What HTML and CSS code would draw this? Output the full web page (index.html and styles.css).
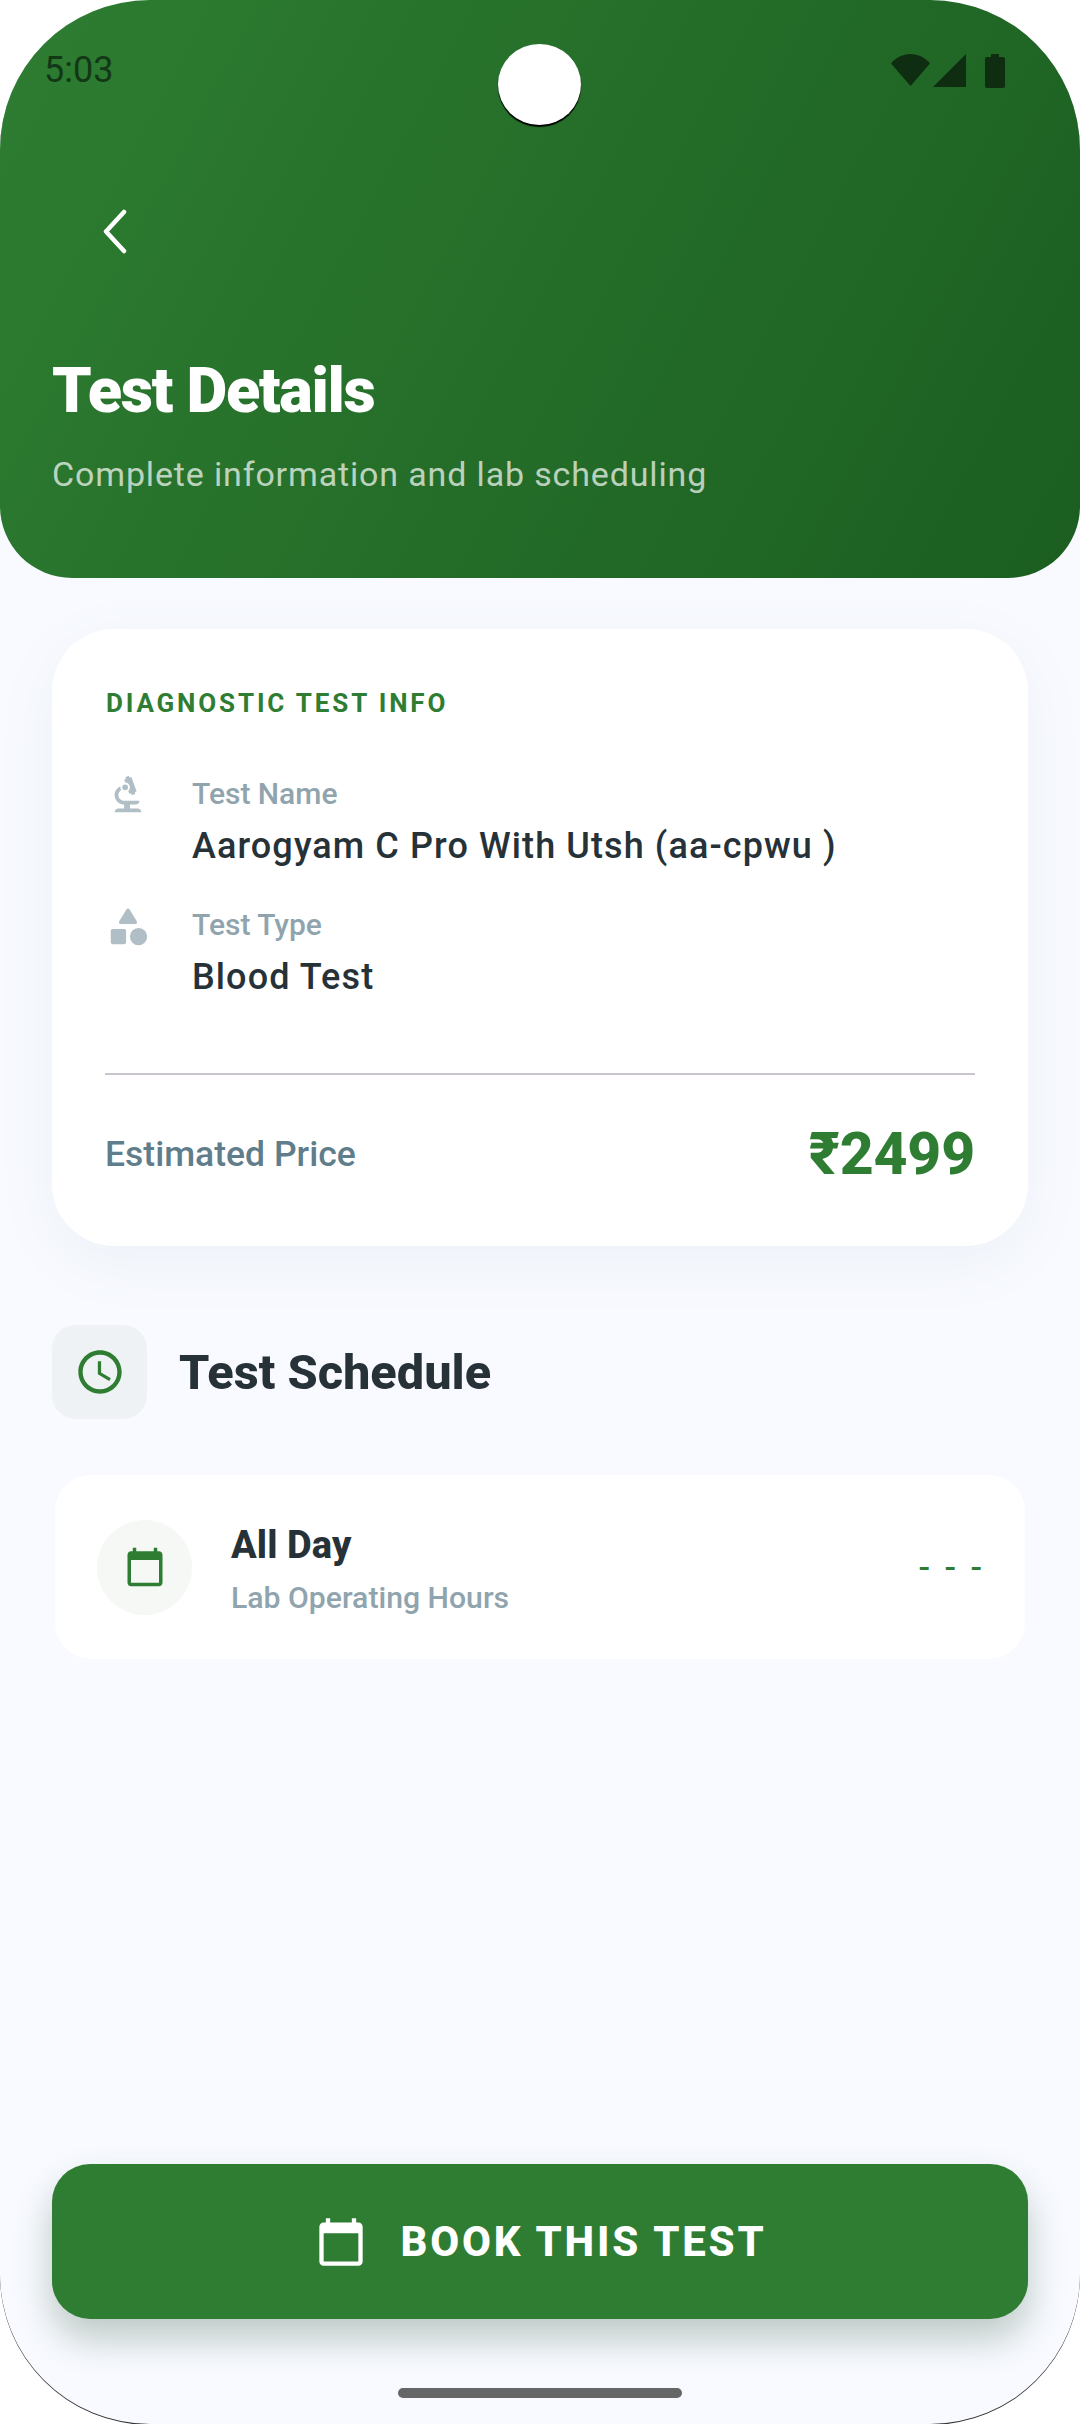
FILE: index.html
```html
<!DOCTYPE html>
<html lang="en">
	<head>
		<meta charset="UTF-8" />
		<meta name="viewport" content="width=device-width, initial-scale=1.0" />
		<title>Test Details</title>
		<link rel="stylesheet" href="styles.css">
	</head>
	<body>
		<div class="screen">
			<!-- Green header with status bar -->
			<header class="header">
				<div class="status-bar">
					<span class="status-time">5:03</span>
					<div class="status-icons">
						<svg class="wifi-icon" viewBox="0 0 39 32"><path d="M0 9.5C5 3.5 12 0 19.5 0S34 3.5 39 9.5L19.5 32z" /></svg>
						<svg class="signal-icon" viewBox="0 0 33 33"><path d="M33 0v33H0z" /></svg>
						<svg class="battery-icon" viewBox="0 0 20 34"><path d="M6 0h8v3h4a2 2 0 0 1 2 2v27a2 2 0 0 1-2 2H2a2 2 0 0 1-2-2V5a2 2 0 0 1 2-2h4z" /></svg>
					</div>
				</div>
				<button class="back-btn">
					<svg viewBox="0 0 26 45" class="back-icon"><path d="M22 3 4 22.5 22 42" /></svg>
				</button>
				<h1 class="title">Test Details</h1>
				<p class="subtitle">Complete information and lab scheduling</p>
			</header>
			<div class="camera"></div>

			<main class="content">
				<section class="info-card">
					<div class="info-heading">DIAGNOSTIC TEST INFO</div>
					<div class="info-row">
						<svg class="info-icon" viewBox="0 0 24 24">
							<path d="M7 19c-1.1 0-2 .9-2 2h14c0-1.1-.9-2-2-2h-4v-2h3c1.1 0 2-.9 2-2h-8c-1.66 0-3-1.34-3-3 0-1.09.59-2.04 1.46-2.56C8.17 9.03 8 8.54 8 8c0-.21.04-.42.09-.62C6.28 8.13 5 9.92 5 12c0 2.76 2.24 5 5 5v2H7z" />
							<path d="M10.56 5.51C11.91 5.54 13 6.64 13 8c0 .75-.33 1.41-.85 1.87l.59 1.62.94-.34.34.94 1.88-.68-.34-.94.94-.34-2.74-7.52-.94.34-.34-.94-1.88.68.34.94-.94.35.56 1.53z" />
							<circle cx="10.5" cy="8" r="1.5" />
						</svg>
						<div>
							<div class="info-label">Test Name</div>
							<div class="info-value">Aarogyam C Pro With Utsh (aa-cpwu )</div>
						</div>
					</div>
					<div class="info-row">
						<svg class="info-icon" viewBox="0 0 24 24">
							<path d="M11.15 3.4 7.43 9.48c-.41.66.07 1.52.85 1.52h7.43c.78 0 1.26-.86.85-1.52L12.85 3.4c-.39-.64-1.31-.64-1.7 0z" />
							<circle cx="17.5" cy="17.5" r="4.5" />
							<path d="M4 21.5h6c.55 0 1-.45 1-1v-6c0-.55-.45-1-1-1H4c-.55 0-1 .45-1 1v6c0 .55.45 1 1 1z" />
						</svg>
						<div>
							<div class="info-label">Test Type</div>
							<div class="info-value">Blood Test</div>
						</div>
					</div>
					<div class="price-row">
						<span class="price-label">Estimated Price</span>
						<span class="price-value">₹2499</span>
					</div>
				</section>

				<div class="schedule-heading">
					<div class="schedule-tile">
						<svg class="clock-icon" viewBox="0 0 24 24">
							<path d="M11.99 2C6.47 2 2 6.48 2 12s4.47 10 9.99 10C17.52 22 22 17.52 22 12S17.52 2 11.99 2zM12 20c-4.42 0-8-3.58-8-8s3.58-8 8-8 8 3.58 8 8-3.58 8-8 8z" />
							<path d="M12.5 7H11v6l5.25 3.15.75-1.23-4.5-2.67z" />
						</svg>
					</div>
					<h2 class="schedule-title">Test Schedule</h2>
				</div>

				<div class="schedule-card">
					<div class="schedule-circle">
						<svg class="calendar-icon" viewBox="0 0 24 24">
							<path d="M20 3h-1V1h-2v2H7V1H5v2H4c-1.1 0-2 .9-2 2v16c0 1.1.9 2 2 2h16c1.1 0 2-.9 2-2V5c0-1.1-.9-2-2-2zm0 18H4V8h16v13z" />
						</svg>
					</div>
					<div class="schedule-text">
						<div class="schedule-day">All Day</div>
						<div class="schedule-note">Lab Operating Hours</div>
					</div>
					<span class="schedule-time">- - -</span>
				</div>
			</main>

			<footer class="footer">
				<button class="book-btn">
					<svg class="book-icon" viewBox="0 0 24 24">
						<path d="M20 3h-1V1h-2v2H7V1H5v2H4c-1.1 0-2 .9-2 2v16c0 1.1.9 2 2 2h16c1.1 0 2-.9 2-2V5c0-1.1-.9-2-2-2zm0 18H4V8h16v13z" />
					</svg>
					BOOK THIS TEST
				</button>
				<div class="home-bar"></div>
			</footer>
		</div>
	</body>
</html>
```

FILE: styles.css
```css
* {
	box-sizing: border-box;
}

body {
	height: 2424px;
	margin: 0;
	overflow: hidden;
	background-color: #ffffff;
	font-family: "Roboto", sans-serif;
}

/* the 1px shadow is the thin dark edge on the bottom corners */
.screen {
	position: relative;
	display: flex;
	flex-direction: column;
	width: 1080px;
	height: 2424px;
	overflow: hidden;
	background-color: #f8faff;
	border-radius: 150px;
	box-shadow: 0 1px 0 0 #333333;
}

.header {
	height: 578px;
	padding: 0 52px;
	color: white;
	background-image: linear-gradient(118deg, #2e7d32, #1b5e20);
	border-radius: 0 0 72px 72px;
}

.status-bar {
	display: flex;
	justify-content: space-between;
	align-items: flex-start;
	height: 88px;
	padding-top: 50px;
	margin: 0 23px 0 -8px;
}

.status-time {
	font-size: 36px;
	line-height: 41px;
	color: #133816;
}

.status-icons {
	display: flex;
	align-items: flex-start;
	padding-top: 4px;
	fill: #0f2d10;
}

.wifi-icon {
	width: 39px;
	height: 32px;
}

.signal-icon {
	width: 33px;
	height: 33px;
	margin-left: 3px;
}

.battery-icon {
	width: 20px;
	height: 34px;
	margin-left: 19px;
}

.camera {
	position: absolute;
	top: 44px;
	left: 498px;
	width: 83px;
	height: 81px;
	background-color: white;
	border-radius: 50%;
	box-shadow: 0 2px 1px #000000;
}

.back-btn {
	display: block;
	padding: 0;
	margin: 121px 0 0 50px;
	background: none;
	border: none;
}

.back-icon {
	display: block;
	width: 26px;
	height: 45px;
	fill: none;
	stroke: white;
	stroke-width: 4.5;
	stroke-linecap: round;
	stroke-linejoin: round;
}

.title {
	margin: 102px 0 0 0;
	font-size: 63px;
	line-height: 70px;
	font-weight: 900;
	letter-spacing: -1.3px;
}

.subtitle {
	margin: 28px 0 0 0;
	font-size: 34px;
	line-height: 40px;
	letter-spacing: 0.85px;
	color: rgba(255, 255, 255, 0.7);
}

.content {
	flex: 1;
	padding: 51px 52px 0 52px;
}

.info-card {
	padding: 59px 53px 14px 53px;
	background-color: white;
	border-radius: 62px;
	box-shadow: 0 16px 60px rgba(96, 125, 139, 0.07);
}

.info-heading {
	margin-left: 1px;
	font-size: 26px;
	line-height: 30px;
	font-weight: 700;
	letter-spacing: 2.85px;
	color: #2e7d32;
}

.info-row {
	display: flex;
	gap: 41px;
	margin-top: 58px;
}

.info-row + .info-row {
	margin-top: 39px;
}

.info-icon {
	flex-shrink: 0;
	width: 46px;
	height: 46px;
	margin-top: -4px;
	fill: #b0bec5;
}

.info-label {
	font-size: 30px;
	line-height: 36px;
	font-weight: 500;
	color: #90a4ae;
}

.info-value {
	margin-top: 12px;
	font-size: 36px;
	line-height: 44px;
	font-weight: 500;
	letter-spacing: 1.1px;
	color: #263238;
}

.price-row {
	display: flex;
	justify-content: space-between;
	align-items: center;
	height: 159px;
	margin-top: 74px;
	border-top: 2px solid #cac4d0;
}

.price-label {
	font-size: 35.5px;
	font-weight: 500;
	color: #607d8b;
}

.price-value {
	font-size: 59px;
	font-weight: 800;
	letter-spacing: -0.2px;
	color: #2e7d32;
}

.schedule-heading {
	display: flex;
	align-items: center;
	gap: 32px;
	margin-top: 79px;
}

.schedule-tile {
	display: flex;
	justify-content: center;
	align-items: center;
	width: 95px;
	height: 94px;
	background-color: #eef2f4;
	border-radius: 24px;
}

.clock-icon {
	width: 52px;
	height: 52px;
	fill: #2e7d32;
}

.schedule-title {
	margin: 0;
	font-size: 48.7px;
	font-weight: 800;
	color: #263238;
}

.schedule-card {
	display: flex;
	align-items: center;
	height: 184px;
	margin: 56px 3px 0 3px;
	padding: 0 40px 0 42px;
	background-color: white;
	border-radius: 36px;
}

.schedule-circle {
	display: flex;
	justify-content: center;
	align-items: center;
	width: 95px;
	height: 95px;
	background-color: #f5f8f5;
	border-radius: 50%;
}

.calendar-icon {
	width: 42px;
	height: 42px;
	fill: #2e7d32;
}

.schedule-text {
	flex: 1;
	margin-left: 39px;
	padding-top: 3px;
}

.schedule-day {
	font-size: 38px;
	line-height: 46px;
	font-weight: 800;
	letter-spacing: 0.1px;
	color: #263238;
}

.schedule-note {
	margin-top: 12px;
	font-size: 30.2px;
	line-height: 36px;
	font-weight: 500;
	color: #90a4ae;
}

.schedule-time {
	font-size: 34px;
	font-weight: 500;
	letter-spacing: 3px;
	color: #2e7d32;
}

.footer {
	padding: 0 52px;
}

.book-btn {
	display: flex;
	justify-content: center;
	align-items: center;
	gap: 33px;
	width: 100%;
	height: 155px;
	padding-left: 8px;
	color: white;
	background-color: #2e7d32;
	border: none;
	border-radius: 38px;
	box-shadow: 0 20px 36px rgba(38, 80, 50, 0.28);
	font-family: "Roboto", sans-serif;
	font-size: 42px;
	font-weight: 800;
	letter-spacing: 2.8px;
}

.book-icon {
	width: 52px;
	height: 52px;
	fill: white;
}

.home-bar {
	width: 284px;
	height: 10px;
	margin: 69px auto 26px auto;
	background-color: #666666;
	border-radius: 5px;
}
```
